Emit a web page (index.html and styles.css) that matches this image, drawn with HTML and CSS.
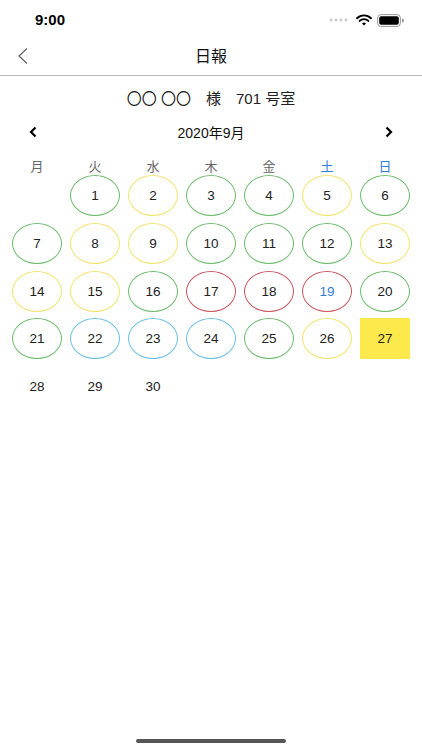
FILE: index.html
```html
<!DOCTYPE html>
<html lang="ja">
<head>
<meta charset="utf-8">
<link rel="stylesheet" href="styles.css">
</head>
<body>
<div class="screen">
  <div class="status">
    <span class="time">9:00</span>
    <span class="status-icons">
      <svg width="22" height="6" viewBox="0 0 22 6"><g fill="#c8c8c8"><circle cx="2" cy="3" r="1.4"/><circle cx="7" cy="3" r="1.4"/><circle cx="12" cy="3" r="1.4"/><circle cx="17" cy="3" r="1.4"/></g></svg>
      <svg width="16" height="12" viewBox="0 0 16 12"><path d="M1 4.2a10 10 0 0 1 14 0" fill="none" stroke="#000" stroke-width="1.9" stroke-linecap="round"/><path d="M3.6 6.9a6.3 6.3 0 0 1 8.8 0" fill="none" stroke="#000" stroke-width="1.9" stroke-linecap="round"/><path d="M6 9.5l2 2 2-2a2.9 2.9 0 0 0-4 0z" fill="#000"/></svg>
      <svg width="27" height="13" viewBox="0 0 27 13"><rect x="0.6" y="0.6" width="22.8" height="11.8" rx="3.3" fill="none" stroke="#999" stroke-width="1"/><rect x="2.2" y="2.2" width="19.6" height="8.6" rx="2" fill="#000"/><path d="M25 4.5v4a2 2 0 0 0 0-4z" fill="#999"/></svg>
    </span>
  </div>
  <div class="navbar">
    <svg class="back" width="14" height="18" viewBox="0 0 14 18"><path d="M11 1.5L3 9l8 7.5" fill="none" stroke="#666" stroke-width="1.3"/></svg>
    <span class="nav-title">日報</span>
  </div>
  <div class="resident">〇〇 〇〇　様　701 号室</div>
  <div class="month-nav">
    <svg width="10" height="12" viewBox="0 0 10 12"><path d="M7.5 1.5L3 6l4.5 4.5" fill="none" stroke="#000" stroke-width="2.2"/></svg>
    <span class="month">2020年9月</span>
    <svg width="10" height="12" viewBox="0 0 10 12"><path d="M2.5 1.5L7 6l-4.5 4.5" fill="none" stroke="#000" stroke-width="2.2"/></svg>
  </div>
  <div class="weekdays">
    <span>月</span><span>火</span><span>水</span><span>木</span><span>金</span><span class="blue">土</span><span class="blue">日</span>
  </div>
  <div class="days">
    <span class="day"></span>
    <span class="day g">1</span>
    <span class="day y">2</span>
    <span class="day g">3</span>
    <span class="day g">4</span>
    <span class="day y">5</span>
    <span class="day g">6</span>
    <span class="day g">7</span>
    <span class="day y">8</span>
    <span class="day y">9</span>
    <span class="day g">10</span>
    <span class="day g">11</span>
    <span class="day g">12</span>
    <span class="day y">13</span>
    <span class="day y">14</span>
    <span class="day y">15</span>
    <span class="day g">16</span>
    <span class="day r">17</span>
    <span class="day r">18</span>
    <span class="day r bluetext">19</span>
    <span class="day g">20</span>
    <span class="day g">21</span>
    <span class="day b">22</span>
    <span class="day b">23</span>
    <span class="day b">24</span>
    <span class="day g">25</span>
    <span class="day y">26</span>
    <span class="day today">27</span>
    <span class="day">28</span>
    <span class="day">29</span>
    <span class="day">30</span>
  </div>
  <div class="home-indicator"></div>
</div>
</body>
</html>
```
FILE: styles.css
```css
html, body {
  margin: 0;
  padding: 0;
  background: #fff;
}
.screen {
  width: 422px;
  height: 750px;
  position: relative;
  font-family: "Liberation Sans", "Noto Sans CJK JP", sans-serif;
  color: #222;
  overflow: hidden;
}
.status {
  height: 40px;
  display: flex;
  align-items: center;
  justify-content: space-between;
  padding: 0 18px 0 35px;
  box-sizing: border-box;
}
.time {
  font-weight: bold;
  font-size: 15px;
  color: #000;
  margin-top: -1px;
}
.status-icons {
  display: flex;
  align-items: center;
  gap: 5px;
}
.navbar {
  height: 36px;
  border-bottom: 1px solid #b8b8b8;
  display: flex;
  align-items: center;
  justify-content: center;
  position: relative;
  padding-bottom: 6px;
  box-sizing: border-box;
}
.back {
  position: absolute;
  left: 16px;
  top: 7px;
}
.nav-title {
  font-size: 16px;
  color: #111;
  font-family: "Noto Sans CJK JP", sans-serif;
}
.resident {
  height: 42px;
  display: flex;
  align-items: center;
  justify-content: center;
  font-size: 15px;
  color: #222;
}
.month-nav {
  height: 28px;
  display: flex;
  align-items: center;
  justify-content: space-between;
  padding: 0 28px;
}
.month {
  font-size: 14px;
  color: #111;
}
.weekdays {
  display: grid;
  grid-template-columns: repeat(7, 58px);
  padding: 0 8px;
  height: 16px;
  align-items: center;
  margin-top: 12px;
}
.weekdays span {
  text-align: center;
  font-size: 13px;
  line-height: 16px;
  color: #666;
  font-family: "Noto Sans CJK JP", sans-serif;
}
.weekdays .blue {
  color: #2f7fd6;
}
.days {
  display: grid;
  grid-template-columns: repeat(7, 58px);
  grid-auto-rows: 41px;
  row-gap: 6.75px;
  padding: 0 8px;
  margin-top: 1px;
}
.day {
  justify-self: center;
  width: 50px;
  height: 41px;
  box-sizing: border-box;
  border-radius: 50%;
  display: flex;
  align-items: center;
  justify-content: center;
  font-size: 13.5px;
  color: #222;
}
.g { border: 1px solid #6cbc6c; }
.y { border: 1px solid #f3e36a; }
.r { border: 1px solid #c9555d; }
.b { border: 1px solid #68bfe6; }
.bluetext { color: #2f7fd6; }
.today {
  background: #fde94c;
  border-radius: 0;
}
.home-indicator {
  position: absolute;
  left: 136px;
  top: 739px;
  width: 150px;
  height: 4px;
  border-radius: 2px;
  background: #555;
}
```
